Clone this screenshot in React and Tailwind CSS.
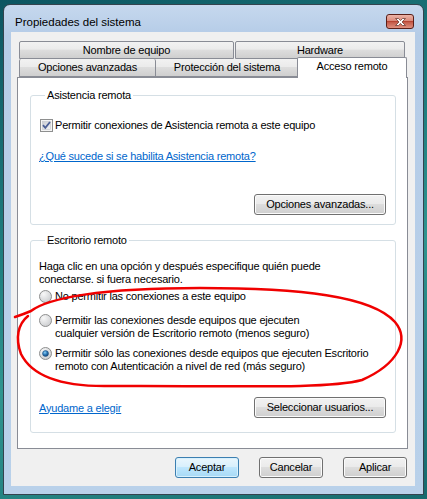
import React from "react";

const btn =
  "h-[21px] rounded-[3px] border border-[#707070] bg-[linear-gradient(#f2f2f2,#ebebeb_45%,#dddddd_50%,#cfcfcf)] shadow-[inset_0_0_0_1px_#fbfbfb] text-black leading-[19px] text-center";

const tab =
  "h-[18px] border border-[#898c95] rounded-t-[2px] bg-[linear-gradient(#f2f2f2,#ebebeb_45%,#dddddd_50%,#cfcfcf)] text-center leading-[16px]";

function CheckBox() {
  return (
    <svg width="13" height="13" viewBox="0 0 13 13" className="shrink-0">
      <defs>
        <linearGradient id="cbg" x1="0" y1="0" x2="1" y2="1">
          <stop offset="0" stopColor="#c9ccd2" />
          <stop offset="1" stopColor="#f4f4f4" />
        </linearGradient>
      </defs>
      <rect x="0.5" y="0.5" width="12" height="12" fill="#f4f4f4" stroke="#8e8f8f" />
      <rect x="2.5" y="2.5" width="8" height="8" fill="url(#cbg)" stroke="#c4c7cc" strokeWidth="0.6" />
      <path d="M3 6.2 L5.3 8.8 L10 3" fill="none" stroke="#4b5f96" strokeWidth="1.8" />
    </svg>
  );
}

function Radio({ checked }) {
  return (
    <svg width="13" height="13" viewBox="0 0 13 13" className="shrink-0">
      <defs>
        <radialGradient id="rbg" cx="0.35" cy="0.3" r="0.8">
          <stop offset="0" stopColor="#f8f8f8" />
          <stop offset="1" stopColor="#c8cacd" />
        </radialGradient>
        <radialGradient id="rdot" cx="0.4" cy="0.35" r="0.7">
          <stop offset="0" stopColor="#8fd1f5" />
          <stop offset="0.5" stopColor="#2b78b8" />
          <stop offset="1" stopColor="#123d6b" />
        </radialGradient>
      </defs>
      <circle cx="6.5" cy="6.5" r="6" fill="url(#rbg)" stroke="#8e8f8f" />
      {checked && <circle cx="6.5" cy="6.5" r="3" fill="url(#rdot)" stroke="#1d4f7e" strokeWidth="0.5" />}
    </svg>
  );
}

export default function App() {
  return (
    <div className="relative w-[427px] h-[499px] overflow-hidden pt-[4px] pl-[3px] bg-[linear-gradient(160deg,#0c5561,#1f7f80_40%,#2f9590_60%,#166a6e)] font-['Liberation_Sans',Arial,sans-serif] text-[11px] tracking-[-0.2px] text-black">
      <div className="w-[421px] h-[491px] border border-[#34434e] rounded-t-[7px] bg-[linear-gradient(#c6d8ee,#b5cce7_30px,#b9d1ea)] flex flex-col">
        {/* title bar */}
        <div className="h-[27px] flex justify-between pl-[11px] pr-[9px]">
          <span className="mt-[10px] leading-[14px] text-[11.5px] tracking-normal">Propiedades del sistema</span>
          <div className="mt-[9px] w-[28px] h-[15px] rounded-[3px] border border-[#5a1f18] bg-[linear-gradient(#ecb3a7,#dd8f80_42%,#b84433_50%,#c65e4c_58%,#e0907f)] flex items-center justify-center">
            <svg width="11" height="8" viewBox="0 0 11 8">
              <path
                d="M0.5 0.5 H3.5 L5.5 2.6 L7.5 0.5 H10.5 L7 4 L10.5 7.5 H7.5 L5.5 5.4 L3.5 7.5 H0.5 L4 4 Z"
                fill="#ffffff"
                stroke="#6e3d35"
                strokeWidth="0.8"
              />
            </svg>
          </div>
        </div>

        {/* client area */}
        <div className="ml-[7px] w-[404px] h-[454px] bg-[#f0f0f0] flex flex-col">
          {/* tabs */}
          <div className="mt-[9px] ml-[8px] flex flex-col">
            <div className="flex gap-[1px]">
              <div className={`${tab} w-[215px]`}>Nombre de equipo</div>
              <div className={`${tab} w-[170px]`}>Hardware</div>
            </div>
            <div className="flex h-[18px] items-start">
              <div className={`${tab} w-[137px] border-t-0 h-[18px]`}>Opciones avanzadas</div>
              <div className={`${tab} w-[143px] border-t-0 border-l-0 h-[18px]`}>Protección del sistema</div>
              <div className="relative z-10 -ml-[2px] -mt-[2px] w-[110px] h-[21px] border border-b-0 border-[#898c95] rounded-t-[2px] bg-white text-center leading-[17px]">
                Acceso remoto
              </div>
            </div>
          </div>

          {/* panel */}
          <div className="ml-[6px] w-[391px] h-[372px] bg-white border border-[#898c95] flex flex-col">
            <fieldset className="mt-[10px] ml-[12px] w-[366px] border border-[#d5dfe5] rounded-[3px] pl-[8px] pr-[9px] pb-[9px]">
              <legend className="ml-[6px] px-[2px] leading-[14px]">Asistencia remota</legend>
              <div className="mt-[16px] flex items-center gap-[2px] ml-[1px] h-[14px]">
                <CheckBox />
                <span className="leading-[14px]">Permitir conexiones de Asistencia remota a este equipo</span>
              </div>
              <div className="mt-[17px] leading-[14px]">
                <a href="#" className="text-[#0066cc] underline">
                  ¿Qué sucede si se habilita Asistencia remota?
                </a>
              </div>
              <div className="mt-[31px] flex justify-end">
                <button className={`${btn} w-[132px]`}>Opciones avanzadas...</button>
              </div>
            </fieldset>

            <fieldset className="mt-[8px] ml-[12px] w-[366px] border border-[#d5dfe5] rounded-[3px] pl-[8px] pr-[9px] pb-[14px]">
              <legend className="ml-[6px] px-[2px] leading-[14px]">Escritorio remoto</legend>
              <p className="mt-[13px] leading-[13px]">
                Haga clic en una opción y después especifique quién puede
                <br />
                conectarse. si fuera necesario.
              </p>
              <div className="mt-[4px] flex items-start gap-[3px]">
                <Radio />
                <span className="leading-[13px]">No permitir las conexiones a este equipo</span>
              </div>
              <div className="mt-[11px] flex items-start gap-[3px]">
                <Radio />
                <span className="leading-[13px]">
                  Permitir las conexiones desde equipos que ejecuten
                  <br />
                  cualquier versión de Escritorio remoto (menos seguro)
                </span>
              </div>
              <div className="mt-[7px] flex items-start gap-[3px]">
                <Radio checked />
                <span className="leading-[13px]">
                  Permitir sólo las conexiones desde equipos que ejecuten Escritorio
                  <br />
                  remoto con Autenticación a nivel de red (más seguro)
                </span>
              </div>
              <div className="mt-[24px] flex items-center justify-between">
                <a href="#" className="text-[#0066cc] underline leading-[14px]">
                  Ayudame a elegir
                </a>
                <button className={`${btn} w-[132px]`}>Seleccionar usuarios...</button>
              </div>
            </fieldset>
          </div>

          {/* dialog buttons */}
          <div className="mt-[8px] pr-[8px] flex justify-end gap-[20px]">
            <button className="h-[21px] w-[64px] rounded-[3px] border border-[#3c7fb1] bg-[linear-gradient(#eaf6fd,#d9f0fc_45%,#bee6fd_50%,#a7d9f5)] shadow-[inset_0_0_0_1px_#d8f1fd] leading-[19px] text-center">
              Aceptar
            </button>
            <button className={`${btn} w-[64px]`}>Cancelar</button>
            <button className={`${btn} w-[64px]`}>Aplicar</button>
          </div>
        </div>
      </div>

      {/* hand-drawn red annotation */}
      <svg className="absolute inset-0 pointer-events-none" width="427" height="499" viewBox="0 0 427 499">
        <path
          d="M15 317 Q24 314 31 311 C48 298 100 288 200 288 C300 288 372 296 395 322 C410 340 398 364 362 380 C325 390 220 385 110 386 C60 387 32 376 21 354 C15 338 18 324 28 316"
          fill="none"
          stroke="#f00000"
          strokeWidth="2.5"
          strokeLinecap="round"
        />
      </svg>
    </div>
  );
}
